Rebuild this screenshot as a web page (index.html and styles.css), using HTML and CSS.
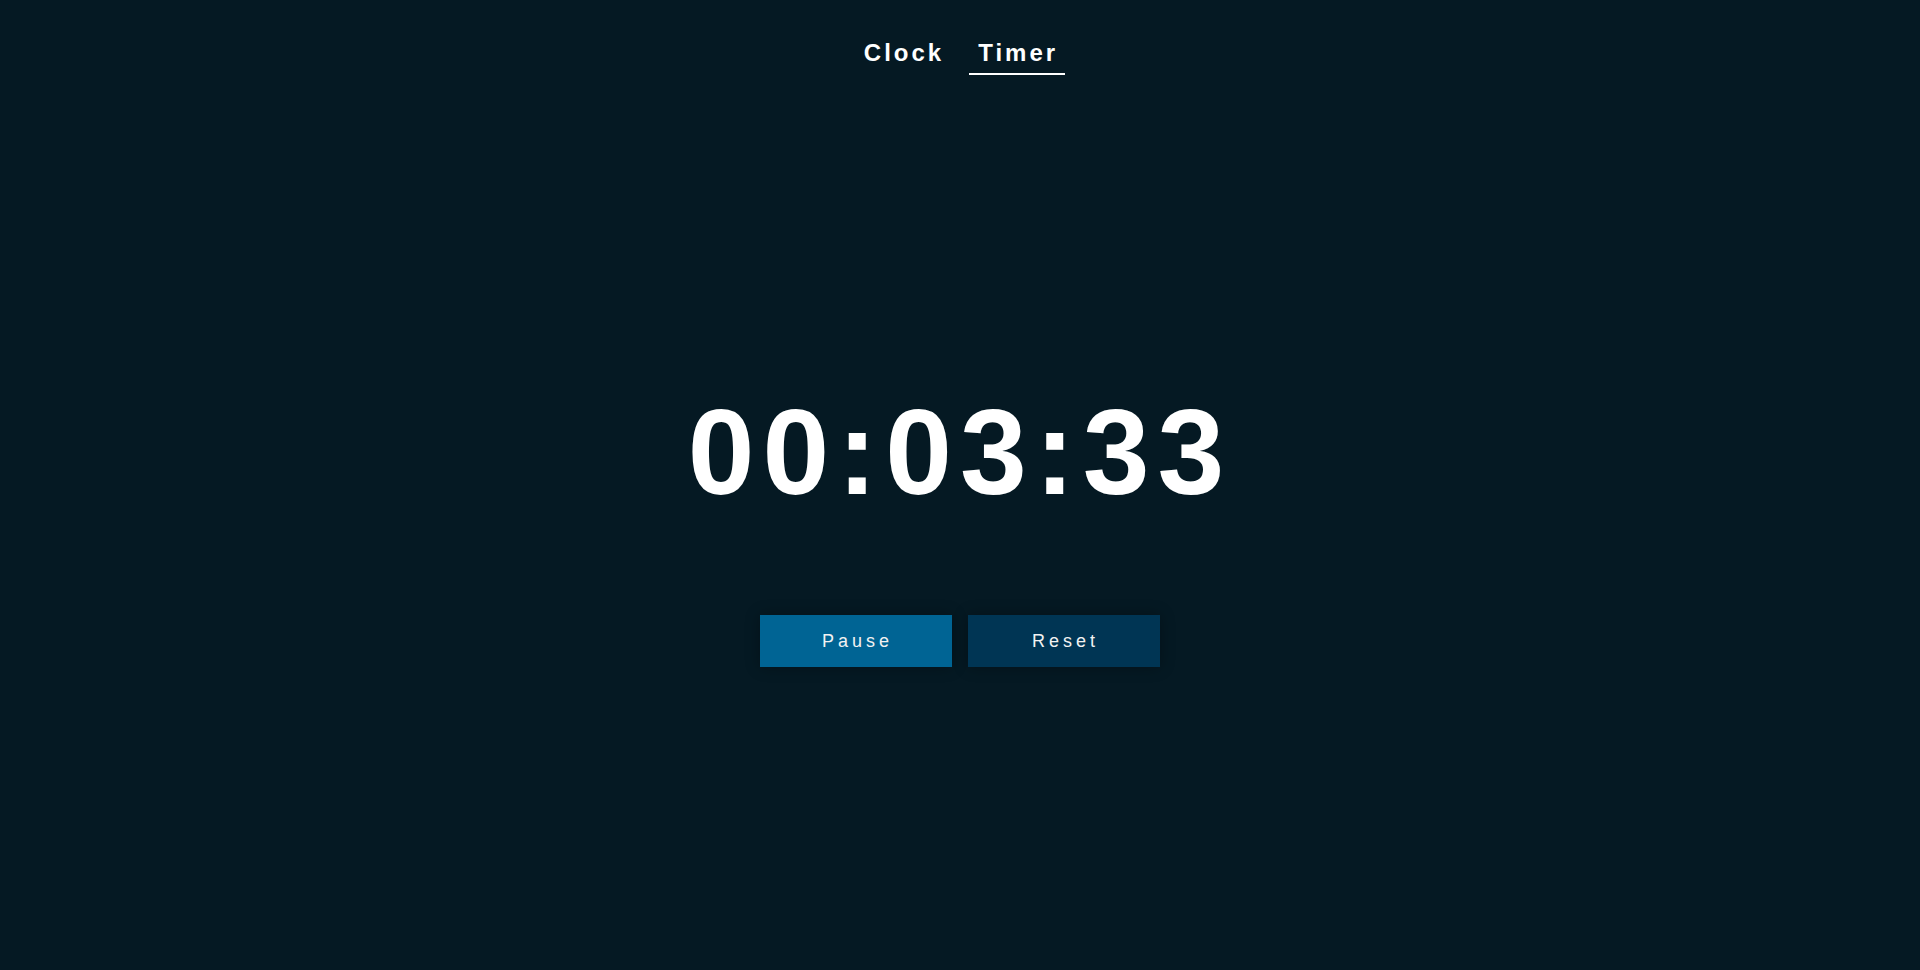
FILE: index.html
```html
<!DOCTYPE html>
<html lang="en">
<head>
<meta charset="utf-8">
<title>Timer</title>
<link rel="stylesheet" href="styles.css">
</head>
<body>
<nav class="tabs">
  <a class="tab">Clock</a>
  <a class="tab tab-active">Timer</a>
</nav>
<main class="main">
  <div class="time">00:03:33</div>
  <div class="actions">
    <button class="btn btn-primary">Pause</button>
    <button class="btn btn-secondary">Reset</button>
  </div>
</main>
</body>
</html>
```
FILE: styles.css
```css
* { box-sizing: border-box; }
html, body { margin: 0; padding: 0; }
body {
  height: 100vh;
  background: #051923;
  color: #ffffff;
  font-family: "Liberation Sans", Arial, sans-serif;
  display: flex;
  flex-direction: column;
  overflow: hidden;
}
.tabs {
  display: flex;
  justify-content: center;
  gap: 18px;
  padding-top: 39px;
}
.tab {
  font-size: 24px;
  line-height: 28px;
  font-weight: 700;
  letter-spacing: 3px;
  padding: 0 7px 6px 9px;
  border-bottom: 2px solid transparent;
  color: #ffffff;
  cursor: pointer;
}
.tab-active {
  border-bottom-color: #ffffff;
}
.main {
  flex: 1;
  display: flex;
  flex-direction: column;
  align-items: center;
  justify-content: center;
  padding-top: 5px;
}
.time {
  font-size: 120px;
  font-weight: 700;
  letter-spacing: 8px;
  line-height: normal;
}
.actions {
  display: flex;
  gap: 16px;
  margin-top: 94px;
}
.btn {
  width: 192px;
  height: 52px;
  border: none;
  color: #f2f2f2;
  font-family: "Liberation Sans", Arial, sans-serif;
  font-size: 18px;
  letter-spacing: 4px;
  padding: 0 0 0 3px;
  box-shadow: 0 0 14px rgba(0, 0, 0, 0.3);
  cursor: pointer;
}
.btn-primary { background: #006494; }
.btn-secondary { background: #003554; }
```
